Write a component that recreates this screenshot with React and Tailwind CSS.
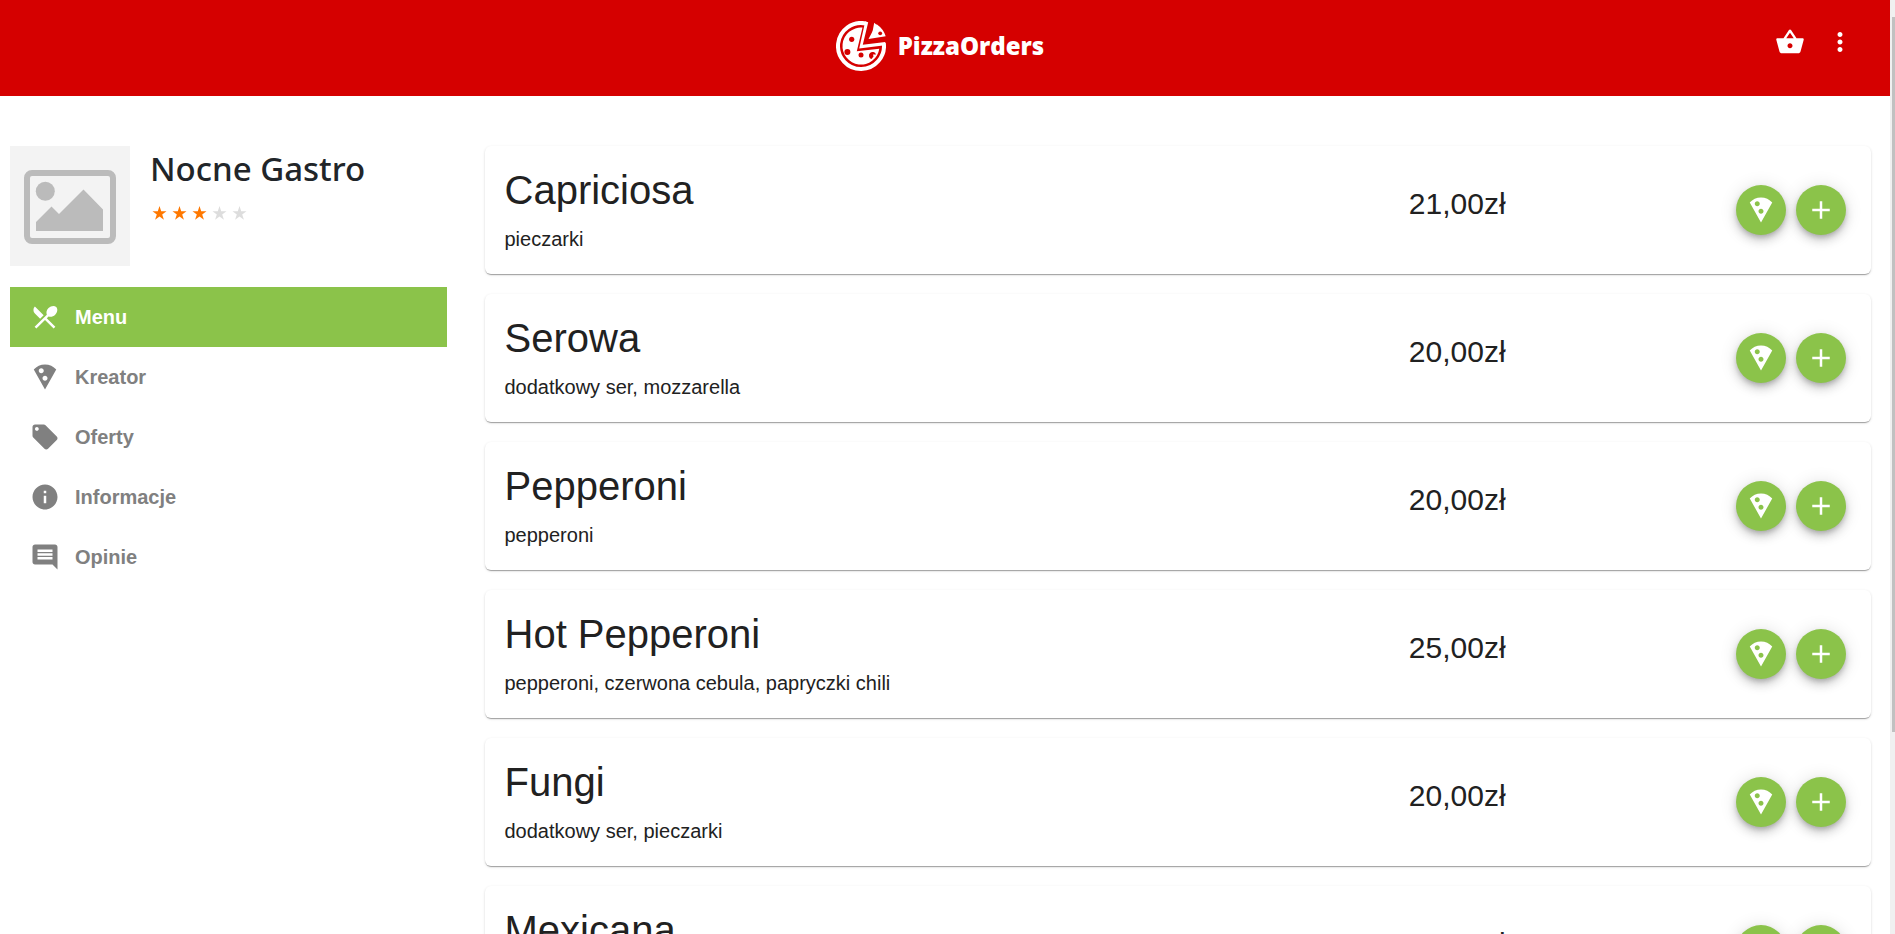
import {
  MdRestaurantMenu,
  MdLocalPizza,
  MdLocalOffer,
  MdInfo,
  MdComment,
  MdShoppingBasket,
  MdMoreVert,
  MdAdd,
} from "react-icons/md";

const navItems = [
  { label: "Menu", Icon: MdRestaurantMenu, active: true },
  { label: "Kreator", Icon: MdLocalPizza },
  { label: "Oferty", Icon: MdLocalOffer },
  { label: "Informacje", Icon: MdInfo },
  { label: "Opinie", Icon: MdComment },
];

const pizzas = [
  { name: "Capriciosa", toppings: "pieczarki", price: "21,00zł" },
  { name: "Serowa", toppings: "dodatkowy ser, mozzarella", price: "20,00zł" },
  { name: "Pepperoni", toppings: "pepperoni", price: "20,00zł" },
  { name: "Hot Pepperoni", toppings: "pepperoni, czerwona cebula, papryczki chili", price: "25,00zł" },
  { name: "Fungi", toppings: "dodatkowy ser, pieczarki", price: "20,00zł" },
  { name: "Mexicana", toppings: "pepperoni, papryczki chili", price: "20,00zł" },
];

function Logo() {
  return (
    <svg viewBox="0 0 50 50" className="size-[50px]" aria-hidden="true">
      <path d="M30 2.550A23 23 0 1 0 47.800 22" fill="none" stroke="#fff" strokeWidth="4" />
      <path d="M29.200.4l3 .9-5.400 22.500 22.400-2.800-.2 3.200-25.800 3.200z" fill="#fff" />
      <path d="M26.500 6.600A18.500 18.500 0 1 0 43.300 27.700L20.800 30.300z" fill="#fff" />
      <g fill="#d50000">
        <circle cx="15.700" cy="18.300" r="2.600" />
        <circle cx="11.400" cy="31" r="3" />
        <circle cx="25" cy="34" r="2.500" />
        <path d="M40 33.500a3.600 3.600 0 1 0-4.500 4.500l2-2.500-.5-2z" />
      </g>
      <path d="M38.200 1.800c1 .4 1.500 2 2.800 1.700a23 23 0 0 1 8.700 11.700L32.500 18l3.300-6.300 1-2.500z" fill="#fff" />
      <circle cx="44.200" cy="12.300" r="1.900" fill="#d50000" />
    </svg>
  );
}

function Header() {
  return (
    <header className="grid h-24 shrink-0 grid-cols-[1fr_auto_1fr] items-center bg-[#d50000] pr-2.5 pb-1 text-white">
      <a
        href="#"
        className="col-start-2 flex items-center gap-3 font-['Open_Sans',sans-serif] text-2xl font-extrabold"
      >
        <Logo />
        PizzaOrders
      </a>
      <div className="flex justify-end gap-5 pr-[25px] pb-2">
        <button type="button" aria-label="Koszyk">
          <MdShoppingBasket size={30} />
        </button>
        <button type="button" aria-label="Więcej">
          <MdMoreVert size={30} />
        </button>
      </div>
    </header>
  );
}

function Placeholder() {
  return (
    <svg viewBox="0 0 120 120" className="size-[120px] shrink-0" aria-hidden="true">
      <rect width="120" height="120" fill="#f3f3f3" />
      <rect x="17" y="27" width="86" height="68" rx="5" fill="none" stroke="#bbb" strokeWidth="6" />
      <circle cx="35.3" cy="45.3" r="9.5" fill="#bbb" />
      <path d="M26 85V76l15.500-15.500 7.500 7.500 24.500-24.500 19.500 20V85z" fill="#bbb" />
    </svg>
  );
}

function Stars({ value }) {
  return (
    <div role="img" aria-label={`Ocena ${value} na 5`} className="flex">
      {[1, 2, 3, 4, 5].map((n) => (
        <svg key={n} viewBox="0 0 20 20" className={n <= value ? "size-5 fill-[#ff7800]" : "size-5 fill-[#ddd]"}>
          <path d="M9.500 3l1.700 5.200h5.300l-4.300 3.200 1.700 5.300-4.400-3.200-4.400 3.200 1.700-5.300-4.300-3.200h5.300z" />
        </svg>
      ))}
    </div>
  );
}

function Sidebar() {
  return (
    <aside className="w-1/4 shrink-0 pl-2.5 pr-[26px]">
      <div className="flex gap-5">
        <Placeholder />
        <div>
          <h1 className="mb-3 font-['Noto_Sans','Open_Sans',sans-serif] text-[33px] leading-[45px] font-medium text-[#212529]">
            Nocne Gastro
          </h1>
          <Stars value={3} />
        </div>
      </div>
      <nav className="mt-[21px]">
        {navItems.map(({ label, Icon, active }) => (
          <a
            key={label}
            href="#"
            aria-current={active ? "page" : undefined}
            className={
              active
                ? "flex h-[60px] items-center gap-[15px] bg-[#8bc34a] px-5 text-xl font-bold text-white"
                : "flex h-[60px] items-center gap-[15px] px-5 text-xl font-bold text-[#808080]"
            }
          >
            <Icon size={30} />
            {label}
          </a>
        ))}
      </nav>
    </aside>
  );
}

function RoundButton({ label, children }) {
  return (
    <button
      type="button"
      aria-label={label}
      className="flex size-[50px] items-center justify-center rounded-full bg-[#8bc34a] text-white shadow-[0_3px_5px_-1px_rgba(0,0,0,0.2),0_6px_10px_0_rgba(0,0,0,0.14),0_1px_18px_0_rgba(0,0,0,0.12)]"
    >
      {children}
    </button>
  );
}

function PizzaCard({ name, toppings, price }) {
  return (
    <li className="grid grid-cols-12 rounded-md bg-white shadow-[0_2px_1px_-1px_rgba(0,0,0,0.2),0_1px_1px_0_rgba(0,0,0,0.14),0_1px_3px_0_rgba(0,0,0,0.12)]">
      <div className="col-span-8 px-5 pt-5 pb-[18px]">
        <h2 className="mb-2 text-[40px] leading-[48px]">{name}</h2>
        <p className="text-xl leading-[34px]">{toppings}</p>
      </div>
      <p className="col-span-2 pt-10 text-3xl">{price}</p>
      <div className="col-span-2 flex items-center justify-end gap-2.5 pr-[25px]">
        <RoundButton label={`Dostosuj ${name}`}>
          <MdLocalPizza size={30} />
        </RoundButton>
        <RoundButton label={`Dodaj ${name}`}>
          <MdAdd size={30} />
        </RoundButton>
      </div>
    </li>
  );
}

export default function App() {
  return (
    <div className="flex h-screen overflow-hidden bg-white font-['Liberation_Sans',Arial,sans-serif] text-[#212121]">
      <div className="flex min-w-0 flex-1 flex-col">
        <Header />
        <div className="flex min-h-0 flex-1 overflow-hidden pt-[50px]">
          <Sidebar />
          <main className="min-w-0 flex-1 pl-3 pr-[19px]">
            <ul className="flex flex-col gap-5">
              {pizzas.map((pizza) => (
                <PizzaCard key={pizza.name} {...pizza} />
              ))}
            </ul>
          </main>
        </div>
      </div>
      <div aria-hidden="true" className="w-[5px] bg-[#f0f0f0] pt-[17px] pl-0.5">
        <div className="h-[78%] bg-[#c1c1c1]" />
      </div>
    </div>
  );
}
